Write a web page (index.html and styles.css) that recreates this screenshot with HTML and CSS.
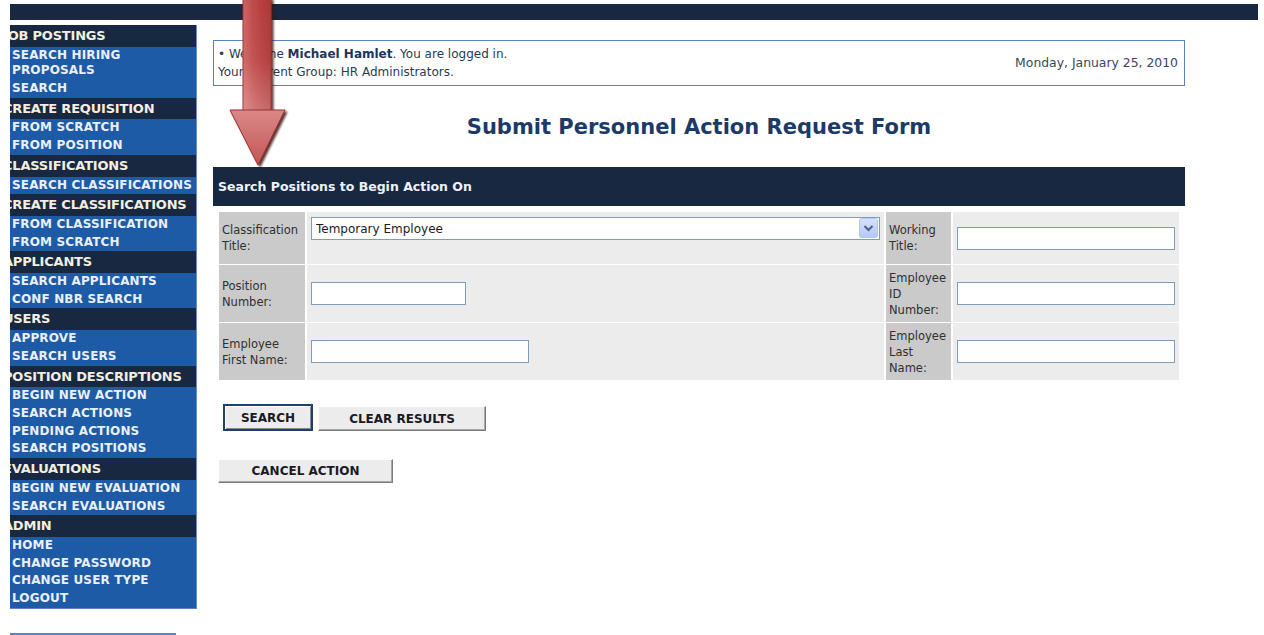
FILE: index.html
```html
<!DOCTYPE html>
<html lang="en">
<head>
<meta charset="utf-8">
<title>Submit Personnel Action Request Form</title>
<link rel="stylesheet" href="styles.css">
</head>
<body>
<div class="clip">
  <div class="page">
    <div class="topbar"></div>
    <div class="layout">
      <aside class="side">
        <nav class="menu">
          <div class="menu-head">JOB POSTINGS</div>
          <ul class="menu-links">
            <li><a href="#">SEARCH HIRING<br>PROPOSALS</a></li>
            <li><a href="#">SEARCH</a></li>
          </ul>
          <div class="menu-head">CREATE REQUISITION</div>
          <ul class="menu-links">
            <li><a href="#">FROM SCRATCH</a></li>
            <li><a href="#">FROM POSITION</a></li>
          </ul>
          <div class="menu-head">CLASSIFICATIONS</div>
          <ul class="menu-links">
            <li><a href="#">SEARCH CLASSIFICATIONS</a></li>
          </ul>
          <div class="menu-head">CREATE CLASSIFICATIONS</div>
          <ul class="menu-links">
            <li><a href="#">FROM CLASSIFICATION</a></li>
            <li><a href="#">FROM SCRATCH</a></li>
          </ul>
          <div class="menu-head">APPLICANTS</div>
          <ul class="menu-links">
            <li><a href="#">SEARCH APPLICANTS</a></li>
            <li><a href="#">CONF NBR SEARCH</a></li>
          </ul>
          <div class="menu-head">USERS</div>
          <ul class="menu-links">
            <li><a href="#">APPROVE</a></li>
            <li><a href="#">SEARCH USERS</a></li>
          </ul>
          <div class="menu-head">POSITION DESCRIPTIONS</div>
          <ul class="menu-links">
            <li><a href="#">BEGIN NEW ACTION</a></li>
            <li><a href="#">SEARCH ACTIONS</a></li>
            <li><a href="#">PENDING ACTIONS</a></li>
            <li><a href="#">SEARCH POSITIONS</a></li>
          </ul>
          <div class="menu-head">EVALUATIONS</div>
          <ul class="menu-links">
            <li><a href="#">BEGIN NEW EVALUATION</a></li>
            <li><a href="#">SEARCH EVALUATIONS</a></li>
          </ul>
          <div class="menu-head">ADMIN</div>
          <ul class="menu-links">
            <li><a href="#">HOME</a></li>
            <li><a href="#">CHANGE PASSWORD</a></li>
            <li><a href="#">CHANGE USER TYPE</a></li>
            <li><a href="#">LOGOUT</a></li>
          </ul>
        </nav>
        <div class="side-box"></div>
      </aside>

      <main class="main">
        <div class="welcome">
          <div class="welcome-text">&bull; Welcome <b>Michael Hamlet</b>. You are logged in.<br>Your Current Group: HR Administrators.</div>
          <div class="welcome-date">Monday, January 25, 2010</div>
        </div>

        <h1 class="title">Submit Personnel Action Request Form</h1>

        <div class="panel-head">Search Positions to Begin Action On</div>

        <form class="search-wrap" action="#">
          <div class="search-grid">
            <label class="cell-label" for="cls">Classification<br>Title:</label>
            <div class="cell-value top">
              <div class="select">
                <select id="cls">
                  <option>Temporary Employee</option>
                </select>
                <span class="select-btn">
                  <svg width="19" height="20" viewBox="0 0 19 20">
                    <defs>
                      <linearGradient id="btnFace" x1="0" y1="0" x2="0" y2="1">
                        <stop offset="0" stop-color="#d6e2fd"/>
                        <stop offset="1" stop-color="#b3c8f6"/>
                      </linearGradient>
                    </defs>
                    <rect x="0.5" y="0.5" width="18" height="19" rx="2" fill="url(#btnFace)" stroke="#b4c7ef"/>
                    <path d="M5.5 8 L9.5 12 L13.5 8" fill="none" stroke="#4d6185" stroke-width="2"/>
                  </svg>
                </span>
              </div>
            </div>
            <label class="cell-label" for="wt">Working<br>Title:</label>
            <div class="cell-value"><input id="wt" class="field long" type="text"></div>

            <label class="cell-label" for="pn">Position<br>Number:</label>
            <div class="cell-value"><input id="pn" class="field short" type="text"></div>
            <label class="cell-label" for="eid">Employee<br>ID<br>Number:</label>
            <div class="cell-value"><input id="eid" class="field long" type="text"></div>

            <label class="cell-label" for="fn">Employee<br>First Name:</label>
            <div class="cell-value"><input id="fn" class="field long" type="text"></div>
            <label class="cell-label" for="ln">Employee<br>Last<br>Name:</label>
            <div class="cell-value"><input id="ln" class="field long" type="text"></div>
          </div>

          <div class="actions">
            <button type="submit" class="btn btn-default">SEARCH</button>
            <button type="button" class="btn btn-clear">CLEAR RESULTS</button>
          </div>
          <div class="actions cancel-row">
            <button type="button" class="btn btn-cancel">CANCEL ACTION</button>
          </div>
        </form>
      </main>
    </div>
  </div>
</div>

<!-- red callout arrow pointing at the search panel -->
<svg class="pointer" width="72" height="172" viewBox="0 0 72 172">
  <defs>
    <linearGradient id="shaftV" x1="0" y1="0" x2="0" y2="1">
      <stop offset="0" stop-color="#b83a3a"/>
      <stop offset="0.55" stop-color="#c04444"/>
      <stop offset="1" stop-color="#d07070"/>
    </linearGradient>
    <linearGradient id="shaftH" x1="0" y1="0" x2="1" y2="0">
      <stop offset="0" stop-color="#ffffff" stop-opacity="0.22"/>
      <stop offset="0.35" stop-color="#ffffff" stop-opacity="0.08"/>
      <stop offset="1" stop-color="#000000" stop-opacity="0.06"/>
    </linearGradient>
    <linearGradient id="headV" x1="0" y1="0" x2="0" y2="1">
      <stop offset="0" stop-color="#da8888"/>
      <stop offset="1" stop-color="#c45656"/>
    </linearGradient>
    <filter id="drop" x="-20%" y="-10%" width="150%" height="130%">
      <feDropShadow dx="2" dy="2" stdDeviation="0.8" flood-color="#3f0c0c" flood-opacity="0.85"/>
    </filter>
  </defs>
  <g filter="url(#drop)">
    <rect x="18" y="-2" width="28" height="113" fill="url(#shaftV)" stroke="#a03434" stroke-width="1"/>
    <rect x="18.5" y="-2" width="27" height="112" fill="url(#shaftH)"/>
    <polygon points="5,110 60,110 33,165" fill="url(#headV)" stroke="#9a2e2e" stroke-width="1" stroke-linejoin="round"/>
  </g>
</svg>
</body>
</html>
```

FILE: styles.css
```css
html, body {
  margin: 0;
  background: #ffffff;
  overflow: hidden;
}

body {
  height: 635px;
  box-sizing: border-box;
  padding: 4px 6px 0 10px;
  font-family: "DejaVu Sans", Verdana, sans-serif;
  color: #2a3650;
}

.clip {
  overflow: hidden;
}

.page {
  margin-left: -10px;
}

.topbar {
  height: 16px;
  background: #172840;
}

.layout {
  display: flex;
  align-items: flex-start;
  gap: 16px;
  margin-top: 5px;
}

/* ---------- left menu ---------- */
.side {
  flex: none;
  width: 197px;
}

.menu {
  background: #1e5ba6;
  border-right: 1px solid #6d8fc0;
  border-bottom: 1px solid #5f86c0;
}

.menu-head {
  background: #172840;
  color: #f3eedf;
  font-weight: bold;
  font-size: 13px;
  letter-spacing: -0.2px;
  line-height: 21.6px;
  padding-left: 3px;
  white-space: nowrap;
}

.menu-links {
  list-style: none;
  margin: 0;
  padding: 0;
}

.menu-links a {
  display: block;
  padding: 1px 0 1px 12px;
  line-height: 15.75px;
  font-size: 12px;
  letter-spacing: 0.15px;
  font-weight: bold;
  color: #eaf0f9;
  text-decoration: none;
  white-space: nowrap;
}

.side-box {
  margin-top: 24px;
  width: 176px;
  height: 30px;
  border-top: 2px solid #5a84c0;
  background: #f4f7fc;
}

/* ---------- main column ---------- */
.main {
  width: 972px;
  flex: none;
}

.welcome {
  margin-top: 15px;
  border: 1px solid #5a82bb;
  display: flex;
  justify-content: space-between;
  align-items: center;
  padding: 4px 6px 4px 4px;
  font-size: 12px;
  line-height: 18px;
  color: #2c3a55;
}

.welcome b {
  color: #1c355e;
}

.welcome-date {
  font-size: 12.4px;
  color: #3a4660;
}

.title {
  margin: 29px 0 28px;
  font-size: 21px;
  line-height: 24px;
  text-align: center;
  color: #1b3a68;
}

.panel-head {
  background: #172840;
  color: #eef2f8;
  font-size: 12.5px;
  font-weight: bold;
  line-height: 39px;
  padding-left: 5px;
}

.search-wrap {
  margin: 0;
  padding: 6px 5px 0 6px;
}

.search-grid {
  display: grid;
  grid-template-columns: 86px 577px 65px 226px;
  grid-template-rows: 52px 57px 57px;
  column-gap: 2px;
  row-gap: 1px;
}

.cell-label {
  background: #cacaca;
  display: flex;
  align-items: center;
  padding: 0 3px;
  font-size: 11.5px;
  line-height: 16px;
  color: #303030;
}

.cell-value {
  background: #ececec;
  display: flex;
  align-items: center;
  padding: 0 4px;
}

.cell-value.top {
  align-items: flex-start;
  padding-top: 5px;
}

.field {
  box-sizing: border-box;
  height: 23px;
  border: 1px solid #7f9db9;
  background: #ffffff;
  padding: 0 3px;
  font-family: inherit;
  font-size: 12px;
}

.field.short { width: 155px; }
.field.long  { width: 218px; }

.select {
  position: relative;
  width: 569px;
  height: 23px;
}

.select select {
  appearance: none;
  -webkit-appearance: none;
  box-sizing: border-box;
  width: 100%;
  height: 100%;
  border: 1px solid #7f9db9;
  background: #ffffff;
  padding: 0 0 0 4px;
  font-family: inherit;
  font-size: 12px;
  color: #1c1c1c;
}

.select-btn {
  position: absolute;
  right: 2px;
  top: 1px;
  width: 19px;
  height: 20px;
  pointer-events: none;
}

.select-btn svg {
  display: block;
}

/* ---------- buttons ---------- */
.actions {
  display: flex;
  align-items: flex-end;
  gap: 5px;
  margin: 24px 0 0 4px;
}

.cancel-row {
  margin: 28px 0 0 -1px;
}

.btn {
  box-sizing: border-box;
  font-family: inherit;
  font-size: 12px;
  font-weight: bold;
  color: #1a1a22;
  background: #ececec;
  border: 1px solid;
  border-color: #ffffff #7b7b7b #7b7b7b #ffffff;
  box-shadow: inset -1px -1px 0 #a9a9a9;
  padding: 0;
  text-align: center;
}

.btn-default {
  width: 90px;
  height: 27px;
  border: 2px solid #1f3f6e;
  box-shadow: inset 1px 1px 0 #ffffff, inset -1px -1px 0 #8a8a8a;
}

.btn-clear {
  width: 168px;
  height: 25px;
}

.btn-cancel {
  width: 175px;
  height: 24px;
}

/* ---------- callout arrow ---------- */
.pointer {
  position: absolute;
  left: 225px;
  top: 0;
}
```
